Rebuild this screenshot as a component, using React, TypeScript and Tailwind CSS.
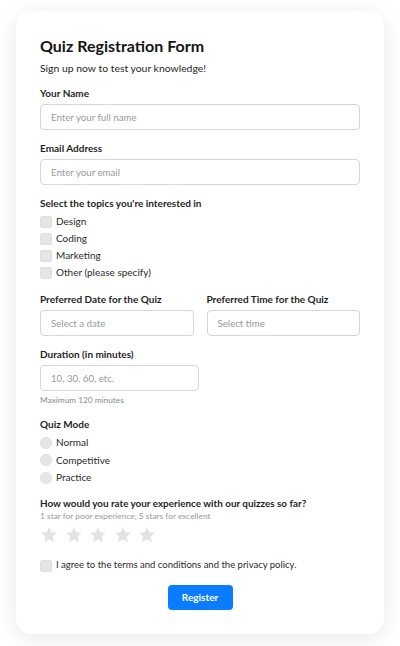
const topics = ["Design", "Coding", "Marketing", "Other (please specify)"];
const modes = ["Normal", "Competitive", "Practice"];

function Label({ children }: { children: React.ReactNode }) {
  return <div className="text-[10px] leading-[16px] font-bold text-[#1f1f1f]">{children}</div>;
}

function Field({ placeholder, className = "" }: { placeholder: string; className?: string }) {
  return (
    <div
      className={`mt-[3px] h-[26px] flex items-center px-[10px] border border-[#d6d6d6] rounded-[4px] text-[9.7px] text-[#9a9a9a] ${className}`}
    >
      {placeholder}
    </div>
  );
}

function StarIcon() {
  return (
    <svg width="18" height="18" viewBox="0 0 24 24">
      <polygon
        points="12,1.5 15.1,8.3 22.5,9.1 17,14.1 18.5,21.5 12,17.8 5.5,21.5 7,14.1 1.5,9.1 8.9,8.3"
        fill="#e3e3e3"
      />
    </svg>
  );
}

export default function App() {
  return (
    <div className="min-h-[646px] bg-white pt-[11px] px-[16px] font-['Lato',sans-serif]">
      <div className="w-[368px] rounded-[16px] bg-white shadow-[0_4px_24px_rgba(0,0,0,0.09)] px-[24px] pt-[24px] pb-[24px]">
        <h1 className="text-[16px] leading-[22px] font-bold text-[#141414]">Quiz Registration Form</h1>
        <p className="mt-[2px] text-[10.4px] leading-[18px] text-[#262626]">Sign up now to test your knowledge!</p>

        {/* Name */}
        <div className="mt-[8px]">
          <Label>Your Name</Label>
          <Field placeholder="Enter your full name" />
        </div>

        {/* Email */}
        <div className="mt-[10px]">
          <Label>Email Address</Label>
          <Field placeholder="Enter your email" />
        </div>

        {/* Topics */}
        <div className="mt-[10px]">
          <Label>Select the topics you're interested in</Label>
          <div className="mt-[2px] flex flex-col">
            {topics.map((t) => (
              <div key={t} className="h-[17px] flex items-center gap-[4px]">
                <span className="w-[12px] h-[12px] rounded-[2px] bg-[#e6e6e6] border border-[#dedede]" />
                <span className="text-[10px] text-[#2a2a2a]">{t}</span>
              </div>
            ))}
          </div>
        </div>

        {/* Date / time */}
        <div className="mt-[10px] grid grid-cols-2 gap-[13px]">
          <div>
            <Label>Preferred Date for the Quiz</Label>
            <Field placeholder="Select a date" />
          </div>
          <div>
            <Label>Preferred Time for the Quiz</Label>
            <Field placeholder="Select time" />
          </div>
        </div>

        {/* Duration */}
        <div className="mt-[10px]">
          <Label>Duration (in minutes)</Label>
          <Field placeholder="10, 30, 60, etc." className="w-[159px]" />
          <div className="mt-[3px] text-[8.3px] leading-[12px] text-[#8a8a8a]">Maximum 120 minutes</div>
        </div>

        {/* Mode */}
        <div className="mt-[10px]">
          <Label>Quiz Mode</Label>
          <div className="mt-[2px] flex flex-col">
            {modes.map((m) => (
              <div key={m} className="h-[17.5px] flex items-center gap-[4px]">
                <span className="w-[12px] h-[12px] rounded-full bg-[#e6e6e6] border border-[#dedede]" />
                <span className="text-[10px] text-[#2a2a2a]">{m}</span>
              </div>
            ))}
          </div>
        </div>

        {/* Rating */}
        <div className="mt-[9.5px]">
          <div className="text-[9.9px] leading-[14px] font-bold text-[#1f1f1f]">
            How would you rate your experience with our quizzes so far?
          </div>
          <div className="text-[8.4px] leading-[12px] text-[#9a9a9a]">1 star for poor experience, 5 stars for excellent</div>
          <div className="mt-[4px] flex gap-[6.5px]">
            {[1, 2, 3, 4, 5].map((i) => (
              <StarIcon key={i} />
            ))}
          </div>
        </div>

        {/* Terms */}
        <div className="mt-[13px] h-[17px] flex items-center gap-[4px]">
          <span className="w-[12px] h-[12px] rounded-[2px] bg-[#e6e6e6] border border-[#dedede]" />
          <span className="text-[9.5px] text-[#2a2a2a]">I agree to the terms and conditions and the privacy policy.</span>
        </div>

        <div className="mt-[10.5px] flex justify-center">
          <button className="w-[65px] h-[25px] rounded-[4px] bg-[#0a7cff] text-white text-[10px] font-bold">
            Register
          </button>
        </div>
      </div>
    </div>
  );
}
